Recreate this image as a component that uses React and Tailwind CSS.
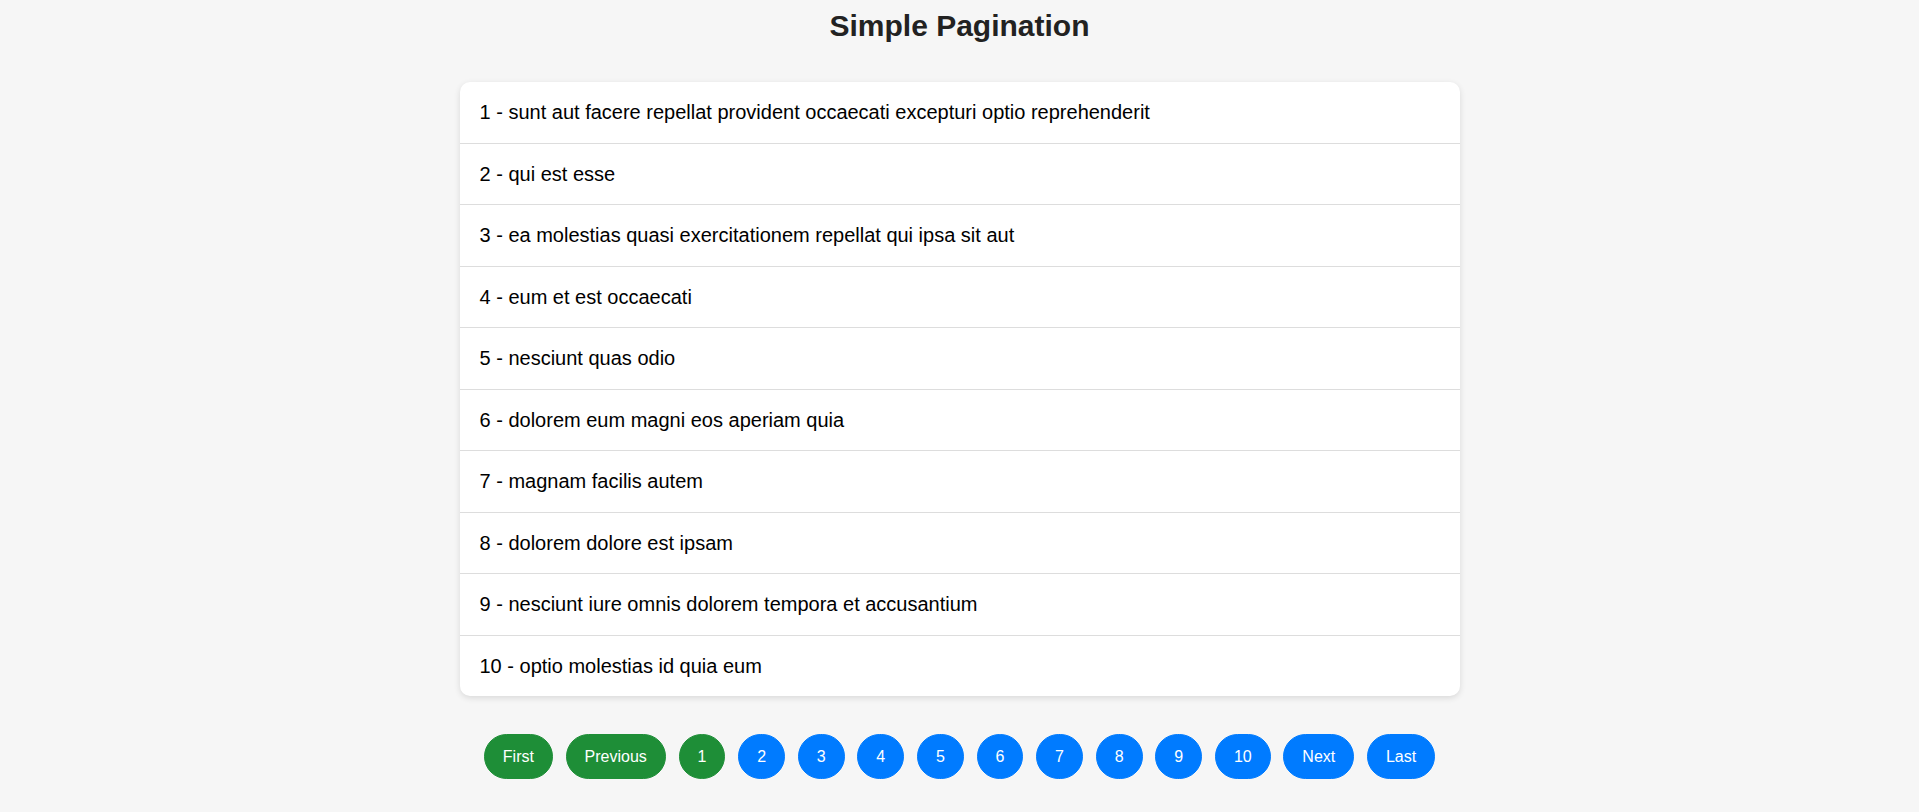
import React from "react";

const posts = [
  "sunt aut facere repellat provident occaecati excepturi optio reprehenderit",
  "qui est esse",
  "ea molestias quasi exercitationem repellat qui ipsa sit aut",
  "eum et est occaecati",
  "nesciunt quas odio",
  "dolorem eum magni eos aperiam quia",
  "magnam facilis autem",
  "dolorem dolore est ipsam",
  "nesciunt iure omnis dolorem tempora et accusantium",
  "optio molestias id quia eum",
];

function Btn({ label, green }) {
  return (
    <button
      className={
        green
          ? "rounded-full border border-[#1e8e37] bg-[#1e8e37] px-[18px] py-3 text-[16px] leading-[19px] text-white"
          : "rounded-full border border-[#007bff] bg-[#007bff] px-[18px] py-3 text-[16px] leading-[19px] text-white"
      }
    >
      {label}
    </button>
  );
}

export default function App() {
  const pages = [1, 2, 3, 4, 5, 6, 7, 8, 9, 10];
  return (
    <div
      className="min-h-[812px] bg-[#f6f6f6] pt-[9px]"
      style={{ fontFamily: '"Liberation Sans", Arial, sans-serif' }}
    >
      <h1 className="mb-[39px] text-center text-[30px] font-bold leading-[34px] text-[#222]">
        Simple Pagination
      </h1>
      <div className="mx-auto w-[1000px] overflow-hidden rounded-[10px] bg-white shadow-[0_2px_6px_rgba(0,0,0,0.12)]">
        {posts.map((t, i) => (
          <div
            key={i}
            className={
              i < posts.length - 1
                ? "border-b border-[#dddddd] px-5 py-[19px] text-[20px] leading-[22.5px] text-black"
                : "px-5 py-[19px] text-[20px] leading-[22.5px] text-black"
            }
          >
            {i + 1} - {t}
          </div>
        ))}
      </div>
      <div className="mt-[38px] flex items-center justify-center gap-[12.7px]">
        <Btn label="First" green />
        <Btn label="Previous" green />
        {pages.map((p) => (
          <Btn key={p} label={String(p)} green={p === 1} />
        ))}
        <Btn label="Next" />
        <Btn label="Last" />
      </div>
    </div>
  );
}
